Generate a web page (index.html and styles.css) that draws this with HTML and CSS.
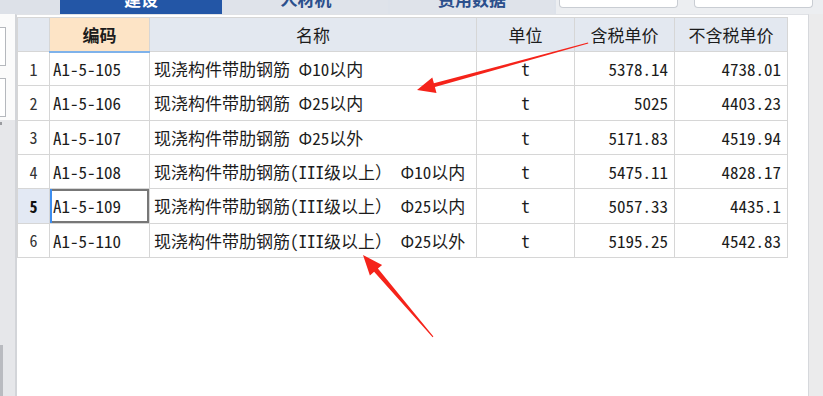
FILE: index.html
```html
<!DOCTYPE html>
<html lang="zh">
<head>
<meta charset="utf-8">
<title>材料价格</title>
<link rel="stylesheet" href="styles.css">
</head>
<body>
<div class="topbar">
  <div class="top-left"></div>
  <div class="tab tab-active"><span>建设</span></div>
  <div class="tab"><span>人材机</span></div>
  <div class="tab"><span>费用数据</span></div>
  <div class="tools">
    <div class="field"></div>
    <div class="field"></div>
  </div>
</div>
<div class="main">
  <div class="sidebar">
    <div class="side-top">
      <div class="side-box"></div>
      <div class="side-box"></div>
    </div>
    <div class="side-bottom">
      <div class="side-mark"></div>
      <div class="side-grip"></div>
    </div>
  </div>
  <div class="panel">
    <table class="grid">
      <colgroup>
        <col class="c-no"><col class="c-code"><col class="c-name"><col class="c-unit"><col class="c-p1"><col class="c-p2">
      </colgroup>
      <thead>
        <tr>
          <th class="h-no"></th>
          <th class="h-code">编码</th>
          <th>名称</th>
          <th>单位</th>
          <th>含税单价</th>
          <th>不含税单价</th>
        </tr>
      </thead>
      <tbody>
        <tr><td class="no">1</td><td class="code">A1-5-105</td><td class="name">现浇构件带肋钢筋 Φ10以内</td><td class="unit">t</td><td class="num">5378.14</td><td class="num">4738.01</td></tr>
        <tr><td class="no">2</td><td class="code">A1-5-106</td><td class="name">现浇构件带肋钢筋 Φ25以内</td><td class="unit">t</td><td class="num">5025</td><td class="num">4403.23</td></tr>
        <tr><td class="no">3</td><td class="code">A1-5-107</td><td class="name">现浇构件带肋钢筋 Φ25以外</td><td class="unit">t</td><td class="num">5171.83</td><td class="num">4519.94</td></tr>
        <tr><td class="no">4</td><td class="code">A1-5-108</td><td class="name">现浇构件带肋钢筋(III级以上） Φ10以内</td><td class="unit">t</td><td class="num">5475.11</td><td class="num">4828.17</td></tr>
        <tr class="current"><td class="no">5</td><td class="code focus">A1-5-109</td><td class="name">现浇构件带肋钢筋(III级以上） Φ25以内</td><td class="unit">t</td><td class="num">5057.33</td><td class="num">4435.1</td></tr>
        <tr><td class="no">6</td><td class="code">A1-5-110</td><td class="name">现浇构件带肋钢筋(III级以上） Φ25以外</td><td class="unit">t</td><td class="num">5195.25</td><td class="num">4542.83</td></tr>
      </tbody>
    </table>
  </div>
  <div class="gutter"></div>
</div>
<svg class="annot" width="823" height="396" viewBox="0 0 823 396">
  <polygon points="588.3,43.6 434.9,87.1 436.5,92.9 417,90 432.3,77.5 433.9,83.3 588,42.6"/>
  <polygon points="433.4,336.6 377.9,268.6 382.1,265 363,255 369.9,275.4 374.1,271.8 432.6,337.3"/>
</svg>
</body>
</html>
```
FILE: styles.css
```css
* { box-sizing: border-box; }
html, body { margin: 0; padding: 0; }
body {
  width: 823px;
  height: 396px;
  overflow: hidden;
  background: #eceef1;
  font-family: "Noto Sans Mono CJK SC", "Noto Sans CJK SC", sans-serif;
  color: #1c1c1c;
  position: relative;
}
.topbar {
  display: flex;
  height: 14px;
  background: #dde2ea;
  overflow: hidden;
}
.top-left { width: 60px; background: #dde1e8; }
.tab {
  width: 164px;
  margin-right: 2px;
  background: #dfe3ea;
  color: #2b4f8c;
  font-size: 17px;
  font-weight: bold;
  text-align: center;
  overflow: hidden;
  line-height: 14px;
}
.tab span { display: block; margin-top: -8px; }
.tab-active { width: 162px; background: #2356a6; color: #ffffff; }
.tools {
  flex: 1;
  display: flex;
  gap: 16px;
  padding-left: 3px;
  background: #eceef1;
}
.field {
  width: 119px;
  height: 8px;
  background: #fff;
  border: 1px solid #c9cdd3;
  border-top: none;
  border-radius: 0 0 4px 4px;
}
.main { display: flex; height: 382px; }
.sidebar { width: 15px; display: flex; flex-direction: column; }
.side-top {
  height: 106px;
  background: #fbfbfb;
  padding-top: 13px;
  display: flex;
  flex-direction: column;
  gap: 12px;
}
.side-box {
  width: 6px;
  height: 39px;
  border: 1px solid #b5b8bd;
  border-left: none;
  background: #fff;
}
.side-bottom {
  flex: 1;
  background: #e6e7ea;
  position: relative;
  display: flex;
  flex-direction: column;
  justify-content: space-between;
}
.side-mark { width: 2px; height: 3px; margin-top: 2px; background: #9a9ca0; }
.side-grip { width: 3px; height: 51px; background: #b9bbc0; }
.panel {
  width: 794px;
  background: #fff;
  border-left: 2px solid #d3d5d9;
  border-right: 1px solid #d6d8dc;
  border-top: 1px solid #e0e2e6;
  padding-top: 2px;
}
.gutter { flex: 1; background: #ebebec; }
.grid {
  border-collapse: collapse;
  table-layout: fixed;
  width: 770px;
  font-size: 17px;
}
.c-no { width: 32px; }
.c-code { width: 100px; }
.c-name { width: 327px; }
.c-unit { width: 98px; }
.c-p1 { width: 100px; }
.c-p2 { width: 113px; }
.grid th, .grid td {
  border: 1px solid #d6d6d6;
  padding: 0;
  white-space: nowrap;
  overflow: hidden;
}
.grid th {
  height: 34px;
  background: #e3e8f0;
  font-weight: normal;
  text-align: center;
}
.grid th.h-code {
  background: #fde4c6;
  font-weight: bold;
  border-bottom: 2px solid #7fb2ea;
}
.grid td { height: 34.33px; }
.grid td.no { text-align: center; font-size: 16px; color: #333; }
.grid td.code { padding-left: 3px; }
.grid td.name { padding-left: 4px; }
.grid td.unit { text-align: center; }
.grid td.num { text-align: right; padding-right: 6px; }
.grid tr.current td.no { background: #e3e9f4; font-weight: bold; color: #111; }
.grid td.focus {
  box-shadow: inset 2px 0 0 #3d8ef0, inset 0 0 0 2px #777;
}
.annot {
  position: absolute;
  left: 0;
  top: 0;
  pointer-events: none;
}
.annot polygon { fill: #f5231a; }
```
